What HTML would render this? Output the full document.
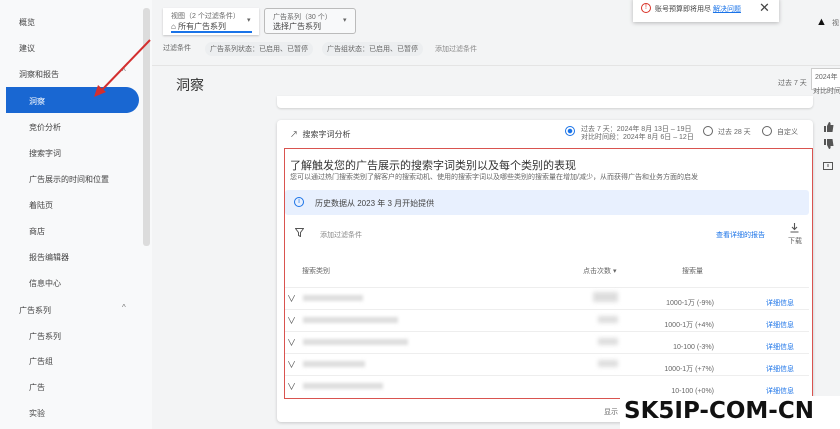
<!DOCTYPE html>
<html><head><meta charset="utf-8"><style>
*{margin:0;padding:0;box-sizing:border-box}
body{width:840px;height:429px;overflow:hidden;background:#f3f4f5;font-family:"Liberation Sans","Noto Sans CJK SC",sans-serif;color:#3c4043;position:relative}
.a{position:absolute;white-space:nowrap}
.s{font-size:8px;color:#444}
.sm{font-size:7px;color:#666}
.blue{color:#1a73e8}
</style></head><body>
<div class="a" style="left:0;top:0;width:152px;height:429px;background:#f8f9fa"></div>
<div class="a" style="left:143px;top:8px;width:7px;height:238px;background:#dcdcdc;border-radius:3px"></div>
<div class="a s" style="left:19px;top:17px">概览</div>
<div class="a s" style="left:19px;top:43px">建议</div>
<div class="a s" style="left:19px;top:69px">洞察和报告</div>
<div class="a s" style="left:122px;top:67px;color:#777">^</div>
<div class="a" style="left:6px;top:87px;width:133px;height:26px;background:#1967d2;border-radius:0 13px 13px 0"></div>
<div class="a s" style="left:29px;top:96px;color:#fff">洞察</div>
<div class="a s" style="left:29px;top:122px">竞价分析</div>
<div class="a s" style="left:29px;top:148px">搜索字词</div>
<div class="a s" style="left:29px;top:174px">广告展示的时间和位置</div>
<div class="a s" style="left:29px;top:200px">着陆页</div>
<div class="a s" style="left:29px;top:226px">商店</div>
<div class="a s" style="left:29px;top:252px">报告编辑器</div>
<div class="a s" style="left:29px;top:278px">信息中心</div>
<div class="a s" style="left:19px;top:305px">广告系列</div>
<div class="a s" style="left:122px;top:303px;color:#777">^</div>
<div class="a s" style="left:29px;top:331px">广告系列</div>
<div class="a s" style="left:29px;top:356px">广告组</div>
<div class="a s" style="left:29px;top:382px">广告</div>
<div class="a s" style="left:29px;top:408px">实验</div>
<svg class="a" style="left:90px;top:35px" width="65" height="65"><line x1="60" y1="5" x2="10" y2="57" stroke="#d32f2f" stroke-width="2"/><path d="M4 62 L8 50 L16 57 Z" fill="#d32f2f"/></svg>
<div class="a" style="left:163px;top:8px;width:96px;height:27px;background:#fff;box-shadow:0 1px 2px rgba(0,0,0,.2)"></div>
<div class="a sm" style="left:171px;top:11px">视图（2 个过滤条件）</div>
<div class="a s" style="left:171px;top:21px">⌂ 所有广告系列</div>
<div class="a" style="left:171px;top:31px;width:81px;height:2px;background:#1a73e8"></div>
<div class="a sm" style="left:247px;top:16px">▾</div>
<div class="a" style="left:264px;top:8px;width:92px;height:26px;background:#f8f9fa;border:1px solid #bbb;border-radius:3px"></div>
<div class="a sm" style="left:273px;top:12px">广告系列（30 个）</div>
<div class="a s" style="left:273px;top:21px">选择广告系列</div>
<div class="a sm" style="left:343px;top:16px">▾</div>
<div class="a sm" style="left:163px;top:43px">过滤条件</div>
<div class="a sm" style="left:205px;top:42px;background:#eceef0;padding:2px 5px;border-radius:9px">广告系列状态：已启用、已暂停</div>
<div class="a sm" style="left:322px;top:42px;background:#eceef0;padding:2px 5px;border-radius:9px">广告组状态：已启用、已暂停</div>
<div class="a sm" style="left:435px;top:44px;color:#888">添加过滤条件</div>
<div class="a" style="left:152px;top:65px;width:688px;height:1px;background:#e4e4e4"></div>
<div class="a" style="left:176px;top:75px;font-size:14px;color:#333">洞察</div>
<div class="a sm" style="left:778px;top:78px">过去 7 天</div>
<div class="a" style="left:811px;top:68px;width:40px;height:22px;background:#fff;border:1px solid #ccc"></div>
<div class="a sm" style="left:815px;top:72px">2024年</div>
<div class="a sm" style="left:813px;top:86px">对比时间段</div>
<div class="a" style="left:633px;top:-2px;width:146px;height:24px;background:#fff;box-shadow:0 1px 4px rgba(0,0,0,.25)"></div>
<div class="a" style="left:641px;top:3px;width:10px;height:10px;border:1.3px solid #d93025;border-radius:50%;font-size:7px;color:#d93025;text-align:center;line-height:8px">!</div>
<div class="a sm" style="left:655px;top:4px;color:#444">账号预算即将用尽 <span class="blue" style="text-decoration:underline">解决问题</span></div>
<div class="a" style="left:759px;top:0px;font-size:13px;color:#444">✕</div>
<div class="a" style="left:816px;top:16px;font-size:11px;color:#111">▲</div>
<div class="a sm" style="left:832px;top:18px">视</div>
<div class="a" style="left:277px;top:96px;width:536px;height:12px;background:#fff;border-radius:0 0 4px 4px;box-shadow:0 1px 2px rgba(0,0,0,.15)"></div>
<div class="a" style="left:277px;top:120px;width:536px;height:302px;background:#fff;border-radius:4px;box-shadow:0 1px 3px rgba(0,0,0,.18)"></div>
<div class="a s" style="left:290px;top:129px">↗ &nbsp;搜索字词分析</div>
<div class="a" style="left:565px;top:126px;width:10px;height:10px;border:1.5px solid #1a73e8;border-radius:50%;background:radial-gradient(#1a73e8 35%,#fff 45%)"></div>
<div class="a sm" style="left:581px;top:126px;line-height:8px">过去 7 天：2024年 8月 13日 – 19日<br>对比时间段：2024年 8月 6日 – 12日</div>
<div class="a" style="left:703px;top:126px;width:10px;height:10px;border:1.3px solid #666;border-radius:50%"></div>
<div class="a sm" style="left:718px;top:127px">过去 28 天</div>
<div class="a" style="left:762px;top:126px;width:10px;height:10px;border:1.3px solid #666;border-radius:50%"></div>
<div class="a sm" style="left:777px;top:127px">自定义</div>
<svg class="a" style="left:823px;top:121px" width="12" height="52">
<path d="M1 5h2v6H1z M4 5 L6 1 Q8 1 7.5 4 H10.5 L9.5 11 H4z" fill="#555"/>
<path d="M1 24h2v-6H1z M4 24 L6 28 Q8 28 7.5 25 H10.5 L9.5 18 H4z" fill="#555"/>
<rect x="0.5" y="41.5" width="9" height="7" fill="none" stroke="#555"/><line x1="5" y1="43" x2="5" y2="46" stroke="#555"/>
</svg>
<div class="a" style="left:284px;top:148px;width:529px;height:251px;border:1.5px solid #d9534f"></div>
<div class="a" style="left:290px;top:157px;font-size:11px;color:#333">了解触发您的广告展示的搜索字词类别以及每个类别的表现</div>
<div class="a sm" style="left:290px;top:172px">您可以通过热门搜索类别了解客户的搜索动机、使用的搜索字词以及哪些类别的搜索量在增加/减少，从而获得广告和业务方面的启发</div>
<div class="a" style="left:285px;top:190px;width:524px;height:25px;background:#e8f0fe;border-radius:3px"></div>
<div class="a" style="left:294px;top:197px;width:10px;height:10px;border:1.3px solid #1a73e8;border-radius:50%;font-size:7px;color:#1a73e8;text-align:center;line-height:8px">i</div>
<div class="a s" style="left:315px;top:198px">历史数据从 2023 年 3 月开始提供</div>
<svg class="a" style="left:295px;top:228px" width="9" height="9"><path d="M0.5 0.5H8.5L5.5 4.5V8.5L3.5 7.5V4.5Z" fill="none" stroke="#555"/></svg>
<div class="a sm" style="left:320px;top:230px;color:#888">添加过滤条件</div>
<div class="a sm blue" style="left:716px;top:230px">查看详细的报告</div>
<svg class="a" style="left:790px;top:223px" width="9" height="10"><path d="M4.5 0V6 M2 4L4.5 6.5L7 4 M0.5 9H8.5" fill="none" stroke="#555" stroke-width="1.1"/></svg>
<div class="a sm" style="left:788px;top:236px">下载</div>
<div class="a sm" style="left:302px;top:266px">搜索类别</div>
<div class="a sm" style="left:583px;top:266px">点击次数 ▾</div>
<div class="a sm" style="left:682px;top:266px">搜索量</div>
<div class="a" style="left:285px;top:287px;width:524px;height:1px;background:#eee"></div>
<div class="a" style="left:285px;top:309px;width:524px;height:1px;background:#eee"></div>
<div class="a" style="left:285px;top:331px;width:524px;height:1px;background:#eee"></div>
<div class="a" style="left:285px;top:353px;width:524px;height:1px;background:#eee"></div>
<div class="a" style="left:285px;top:375px;width:524px;height:1px;background:#eee"></div>
<div class="a" style="left:287px;top:288px;font-size:9px;color:#555;line-height:22px">∨<br>∨<br>∨<br>∨<br>∨</div>
<div class="a" style="left:303px;top:295px;width:60px;height:6px;background:#ddd;filter:blur(1.5px)"></div>
<div class="a" style="left:303px;top:317px;width:95px;height:6px;background:#ddd;filter:blur(1.5px)"></div>
<div class="a" style="left:303px;top:339px;width:105px;height:6px;background:#ddd;filter:blur(1.5px)"></div>
<div class="a" style="left:303px;top:361px;width:62px;height:6px;background:#ddd;filter:blur(1.5px)"></div>
<div class="a" style="left:303px;top:383px;width:80px;height:6px;background:#ddd;filter:blur(1.5px)"></div>
<div class="a" style="left:593px;top:292px;width:25px;height:10px;background:#ddd;filter:blur(2px)"></div>
<div class="a" style="left:598px;top:316px;width:20px;height:7px;background:#ddd;filter:blur(2px)"></div>
<div class="a" style="left:598px;top:338px;width:20px;height:7px;background:#ddd;filter:blur(2px)"></div>
<div class="a" style="left:598px;top:360px;width:20px;height:7px;background:#ddd;filter:blur(2px)"></div>
<div class="a sm" style="left:640px;top:293px;width:74px;text-align:right;line-height:22px">1000-1万 (-9%)<br>1000-1万 (+4%)<br>10-100 (-3%)<br>1000-1万 (+7%)<br>10-100 (+0%)</div>
<div class="a sm blue" style="left:766px;top:293px;line-height:22px">详细信息<br>详细信息<br>详细信息<br>详细信息<br>详细信息</div>
<div class="a sm" style="left:604px;top:407px">显示</div>
<div class="a" style="left:620px;top:396px;width:220px;height:33px;background:#fff"></div>
<div class="a" style="left:624px;top:398px;font-size:23px;font-weight:bold;color:#111;font-family:'DejaVu Sans','Liberation Sans',sans-serif">SK5IP-COM-CN</div>
</body></html>
